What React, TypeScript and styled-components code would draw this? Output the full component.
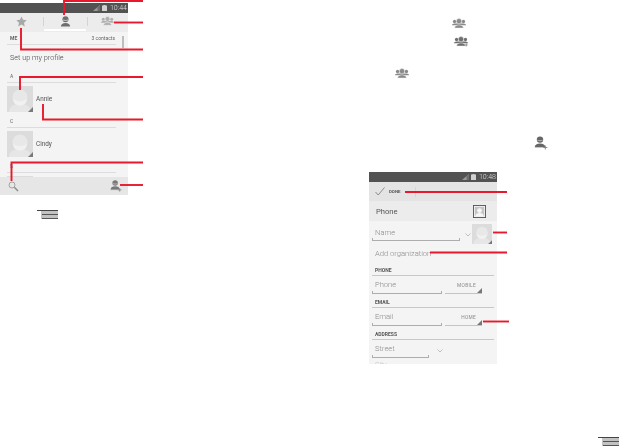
import React from "react";
import styled, { createGlobalStyle } from "styled-components";

const Global = createGlobalStyle`
  html, body { margin: 0; padding: 0; background: #fff; }
  body { font-family: "Roboto", "Liberation Sans", sans-serif; }
`;

const Page = styled.div`
  position: relative;
  width: 619px;
  height: 446px;
  overflow: hidden;
  background: #fff;
  display: grid;
  grid-template-columns: 128px 128px;
  column-gap: 241px;
  align-items: start;
`;

const Phone = styled.div<{ $top: number }>`
  margin-top: ${(p) => p.$top}px;
  height: 192px;
  overflow: hidden;
  display: flex;
  flex-direction: column;
  background: #f4f4f4;
  filter: blur(0.3px);
`;

const StatusBar = styled.div`
  flex: 0 0 10px;
  background: #525252;
  display: flex;
  align-items: center;
  justify-content: flex-end;
  gap: 2px;
  padding-right: 1px;
`;

const Clock = styled.span`
  font-size: 7px;
  font-weight: 300;
  line-height: 10px;
  color: #e0e0e0;
  margin-left: 1px;
`;

const TabBar = styled.div`
  flex: 0 0 19px;
  background: #ececec;
  display: grid;
  grid-template-columns: 43px 44px 41px;
`;

const Tab = styled.div<{ $active?: boolean; $divider?: boolean }>`
  position: relative;
  display: flex;
  align-items: center;
  justify-content: center;
  padding-bottom: 3px;
  &::before {
    content: "";
    display: ${(p) => (p.$divider ? "block" : "none")};
    position: absolute;
    left: 0;
    top: 4px;
    height: 9px;
    width: 1px;
    background: #d4d4d4;
  }
  &::after {
    content: "";
    display: ${(p) => (p.$active ? "block" : "none")};
    position: absolute;
    left: 1px;
    right: 1px;
    bottom: 1px;
    height: 2px;
    background: #fff;
  }
`;

const List = styled.div`
  position: relative;
  flex: 1;
  min-height: 0;
  overflow: hidden;
  padding: 0 12px 0 7px;
  &::after {
    content: "";
    position: absolute;
    top: 4px;
    right: 4px;
    width: 2px;
    height: 12px;
    background: #bdbdbd;
  }
`;

const GroupHead = styled.div`
  height: 12px;
  border-bottom: 1px solid #dcdcdc;
  display: flex;
  align-items: center;
  justify-content: space-between;
  padding: 0 1px 0 3px;
  font-size: 5px;
  color: #666;
`;

const HeadTitle = styled.span`
  font-weight: 700;
`;

const Profile = styled.div`
  height: 25px;
  display: flex;
  align-items: center;
  padding-left: 3px;
  font-size: 7.3px;
  font-weight: 300;
  color: #444;
`;

const ContactRow = styled.div`
  display: flex;
  align-items: center;
  gap: 3px;
  padding: 3px 0;
  font-size: 6.4px;
  color: #555;
`;

const BottomBar = styled.div`
  flex: 0 0 18px;
  background: #e6e6e6;
  display: flex;
  align-items: center;
  justify-content: space-between;
  padding: 0 6px 0 8px;
`;

const ActionBar = styled.div`
  flex: 0 0 19px;
  background: #e4e4e4;
  display: flex;
  align-items: center;
  padding-left: 6px;
  gap: 4px;
`;

const DoneLabel = styled.span`
  width: 26px;
  height: 10px;
  line-height: 10px;
  font-size: 4.4px;
  font-weight: 700;
  color: #555;
  border-right: 1px solid #d6d6d6;
`;

const AccountRow = styled.div`
  flex: 0 0 20px;
  background: #ececec;
  display: flex;
  align-items: center;
  justify-content: space-between;
  padding: 0 11px 0 7px;
  font-size: 7.6px;
  color: #555;
`;

const Form = styled.div`
  flex: 1;
  min-height: 0;
  overflow: hidden;
  padding: 0 3px;
`;

const NameRow = styled.div`
  height: 24px;
  box-sizing: border-box;
  padding: 3px 2px 0 0;
  display: flex;
  align-items: flex-start;
`;

const Field = styled.div<{ $w: number; $h?: number }>`
  position: relative;
  box-sizing: border-box;
  width: ${(p) => p.$w}px;
  height: ${(p) => p.$h ?? 18}px;
  border-bottom: 1px solid #adadad;
  padding-left: 3px;
  display: flex;
  align-items: center;
  font-size: 7.6px;
  font-weight: 300;
  color: #8a8a8a;
  &::before,
  &::after {
    content: "";
    position: absolute;
    bottom: 0;
    width: 1px;
    height: 2px;
    background: #adadad;
  }
  &::before { left: 0; }
  &::after { right: 0; }
`;

const Chevron = styled.svg<{ $ml: number; $mt: number }>`
  margin: ${(p) => p.$mt}px 0 0 ${(p) => p.$ml}px;
  flex: none;
`;

const AvatarSlot = styled.div`
  margin-left: auto;
  line-height: 0;
`;

const Organization = styled.div`
  height: 16px;
  display: flex;
  align-items: center;
  padding-left: 3px;
  font-size: 7.6px;
  font-weight: 300;
  color: #8a8a8a;
`;

const SectionLabel = styled.div<{ $h: number }>`
  box-sizing: border-box;
  height: ${(p) => p.$h}px;
  border-bottom: 1px solid #c8c8c8;
  padding: 0 0 2px 3px;
  display: flex;
  align-items: flex-end;
  font-size: 5px;
  font-weight: 700;
  color: #555;
`;

const FieldRow = styled.div`
  display: flex;
  justify-content: flex-start;
  gap: 3px;
`;

const TypePicker = styled.div`
  position: relative;
  box-sizing: border-box;
  width: 37px;
  height: 18px;
  border-bottom: 1px solid #c4c4c4;
  padding: 6.500px 6px 0 0;
  text-align: right;
  font-size: 4.8px;
  letter-spacing: 0.3px;
  color: #8a8a8a;
  &::after {
    content: "";
    position: absolute;
    right: 0;
    bottom: 0;
    border-style: solid;
    border-width: 0 0 5px 5px;
    border-color: transparent transparent #777 transparent;
  }
`;

const CutOff = styled.div`
  padding: 3px 0 0 3px;
  font-size: 7px;
  font-weight: 300;
  color: #bbb;
`;

const Loose = styled.div<{ $x: number; $y: number }>`
  position: absolute;
  left: ${(p) => p.$x}px;
  top: ${(p) => p.$y}px;
  line-height: 0;
  filter: blur(0.3px);
`;

const Callouts = styled.svg`
  position: absolute;
  left: 0;
  top: 0;
  pointer-events: none;
`;

const Person = () => (
  <svg width="11" height="11" viewBox="0 0 12 12">
    <circle cx="6" cy="3.600" r="3.300" fill="#6e6e6e" />
    <path d="M1 11.500c0-2.600 2-4 5-4s5 1.400 5 4z" fill="#6e6e6e" />
    <path d="M3.200 4.200c1.600.9 4 .9 5.600 0" stroke="#e8e8e8" strokeWidth="0.8" fill="none" />
  </svg>
);

const Group = ({ color = "#b0b0b0", plus = false, w = 13 }: { color?: string; plus?: boolean; w?: number }) => (
  <svg width={w} height={(w * 12) / 16} viewBox="0 0 16 12">
    <circle cx="2.900" cy="4" r="1.900" fill={color} />
    <circle cx="13.100" cy="4" r="1.900" fill={color} />
    <path d="M0 8.400c0-1.400 1.300-2.200 3-2.200h10c1.700 0 3 .8 3 2.200z" fill={color} />
    <circle cx="8" cy="3.600" r="3" fill={color} stroke="#f3f3f3" strokeWidth="0.5" />
    <path d="M3 11.500c0-2.400 2.200-3.600 5-3.600s5 1.200 5 3.600z" fill={color} stroke="#f3f3f3" strokeWidth="0.5" />
    {plus && <path d="M14 8.500v3.500M12.200 10.200h3.600" stroke="#777" strokeWidth="0.8" />}
  </svg>
);

const AddPerson = ({ size = 14, color = "#666" }: { size?: number; color?: string }) => (
  <svg width={size} height={size} viewBox="0 0 14 14">
    <circle cx="6" cy="3.600" r="3.200" fill={color} />
    <path d="M3.400 4.200c1.400.7 3.800.7 5.200 0" stroke="#ddd" strokeWidth="0.7" fill="none" />
    <path d="M.8 11c0-2.400 2.200-3.600 5.200-3.600s5.200 1.200 5.200 3.600z" fill={color} />
    <path d="M.8 11.300h9" stroke="#888" strokeWidth="0.6" />
    <path d="M11.300 9.500v4M9.300 11.500h4" stroke="#888" strokeWidth="1" />
  </svg>
);

const Star = () => (
  <svg width="11" height="11" viewBox="0 0 24 24">
    <path d="M12 1l3.400 7.400 8 .9-5.900 5.500 1.600 8L12 18.800 4.900 22.800l1.600-8L.6 9.300l8-.9z" fill="#a8a8a8" />
  </svg>
);

const Search = () => (
  <svg width="11" height="11" viewBox="0 0 11 11">
    <circle cx="4" cy="4" r="3" fill="none" stroke="#a4a4a4" strokeWidth="1" />
    <path d="M6.300 6.300L10 10" stroke="#8c8c8c" strokeWidth="1.500" />
  </svg>
);

const Avatar = ({ size }: { size: number }) => (
  <svg width={size} height={size} viewBox="0 0 26 26">
    <rect width="26" height="26" fill="#dcdcdc" />
    <path d="M2 26c0-5 4-8 11-8s11 3 11 8z" fill="#e6e6e6" />
    <circle cx="13" cy="11" r="7.500" fill="#e8e8e8" />
    <path d="M6 12.500c3 3.500 11 3.500 14 0-.5 5-3 7-7 7s-6.500-2-7-7z" fill="#f1f1f1" />
    <path d="M26 21v5h-5z" fill="#7a7a7a" />
  </svg>
);

const Signal = () => (
  <svg width="7" height="6" viewBox="0 0 7 6">
    <path d="M0 6l7-6v6z" fill="#9a9a9a" />
    <path d="M4.500 2.200L7 0v6H4.500z" fill="#6d6d6d" />
  </svg>
);

const Battery = () => (
  <svg width="5" height="6" viewBox="0 0 5 6">
    <path d="M1.500 0h2v.6H5V6H0V.6h1.500z" fill="#d0d0d0" />
  </svg>
);

const Check = () => (
  <svg width="10" height="9" viewBox="0 0 10 9">
    <path d="M.5 5l2.700 3L9.500.5" fill="none" stroke="#777" strokeWidth="0.8" />
  </svg>
);

const ContactCard = () => (
  <svg width="13" height="13" viewBox="0 0 14 14">
    <rect x="0.500" y="0.500" width="13" height="13" fill="#f3f3f3" stroke="#555" />
    <rect x="2" y="2" width="10" height="10" fill="#c4c4c4" />
    <circle cx="7" cy="6" r="2.600" fill="#f6f6f6" />
    <path d="M2.500 12c0-2.500 2-3.500 4.500-3.500s4.500 1 4.500 3.500z" fill="#f6f6f6" />
  </svg>
);

const MenuIcon = () => (
  <svg width="21" height="10" viewBox="0 0 21 10">
    <rect x="4" y="0" width="17" height="9" fill="#c2c2c2" />
    <rect x="0" y="0" width="21" height="1" fill="#444" />
    <rect x="5" y="4" width="16" height="1" fill="#555" />
    <rect x="5" y="8" width="16" height="1" fill="#555" />
  </svg>
);

const Down = ({ ml, mt }: { ml: number; mt: number }) => (
  <Chevron $ml={ml} $mt={mt} width="6" height="4" viewBox="0 0 6 4">
    <path d="M.5.500L3 3 5.500.500" fill="none" stroke="#a8a8a8" strokeWidth="0.7" />
  </Chevron>
);

const redLines = [
  "M64 15V1H143",
  "M114 22.500H143",
  "M21 28V49.500H143",
  "M20 90V77H143",
  "M43 104V119.500H143",
  "M11.500 181V162.500H143",
  "M120 185H143",
  "M405 192H507",
  "M493 232.500H507",
  "M430 252.500H507",
  "M483 321.500H509",
];

export default function App() {
  return (
    <Page>
      <Global />
      <Phone $top={3}>
        <StatusBar>
          <Signal />
          <Battery />
          <Clock>10:44</Clock>
        </StatusBar>
        <TabBar>
          <Tab><Star /></Tab>
          <Tab $active $divider><Person /></Tab>
          <Tab $divider><Group /></Tab>
        </TabBar>
        <List>
          <GroupHead>
            <HeadTitle>ME</HeadTitle>
            <span>3 contacts</span>
          </GroupHead>
          <Profile>Set up my profile</Profile>
          <GroupHead>A</GroupHead>
          <ContactRow><Avatar size={26} />Annie</ContactRow>
          <GroupHead>C</GroupHead>
          <ContactRow><Avatar size={26} />Cindy</ContactRow>
          <GroupHead>S</GroupHead>
          <ContactRow><Avatar size={26} /></ContactRow>
        </List>
        <BottomBar>
          <Search />
          <AddPerson size={12} color="#777" />
        </BottomBar>
      </Phone>

      <Phone $top={172}>
        <StatusBar>
          <Signal />
          <Battery />
          <Clock>10:48</Clock>
        </StatusBar>
        <ActionBar>
          <Check />
          <DoneLabel>DONE</DoneLabel>
        </ActionBar>
        <AccountRow>
          Phone
          <ContactCard />
        </AccountRow>
        <Form>
          <NameRow>
            <Field $w={88} $h={17}>Name</Field>
            <Down ml={5} mt={9} />
            <AvatarSlot><Avatar size={20} /></AvatarSlot>
          </NameRow>
          <Organization>Add organization</Organization>
          <SectionLabel $h={15}>PHONE</SectionLabel>
          <FieldRow>
            <Field $w={70}>Phone</Field>
            <TypePicker>MOBILE</TypePicker>
          </FieldRow>
          <SectionLabel $h={14}>EMAIL</SectionLabel>
          <FieldRow>
            <Field $w={70}>Email</Field>
            <TypePicker>HOME</TypePicker>
          </FieldRow>
          <SectionLabel $h={14}>ADDRESS</SectionLabel>
          <FieldRow>
            <Field $w={57}>Street</Field>
            <Down ml={5} mt={9} />
          </FieldRow>
          <CutOff>City</CutOff>
        </Form>
      </Phone>

      <Loose $x={37} $y={210}><MenuIcon /></Loose>
      <Loose $x={598} $y={437}><MenuIcon /></Loose>
      <Loose $x={452} $y={18}><Group w={14} color="#8a8a8a" /></Loose>
      <Loose $x={454} $y={36}><Group w={14} color="#707070" plus /></Loose>
      <Loose $x={395} $y={68}><Group w={14} color="#8a8a8a" /></Loose>
      <Loose $x={534} $y={136}><AddPerson /></Loose>

      <Callouts width="619" height="446" viewBox="0 0 619 446">
        {redLines.map((d) => (
          <path key={d} d={d} fill="none" stroke="#e8192c" strokeWidth="1.9" />
        ))}
      </Callouts>
    </Page>
  );
}
